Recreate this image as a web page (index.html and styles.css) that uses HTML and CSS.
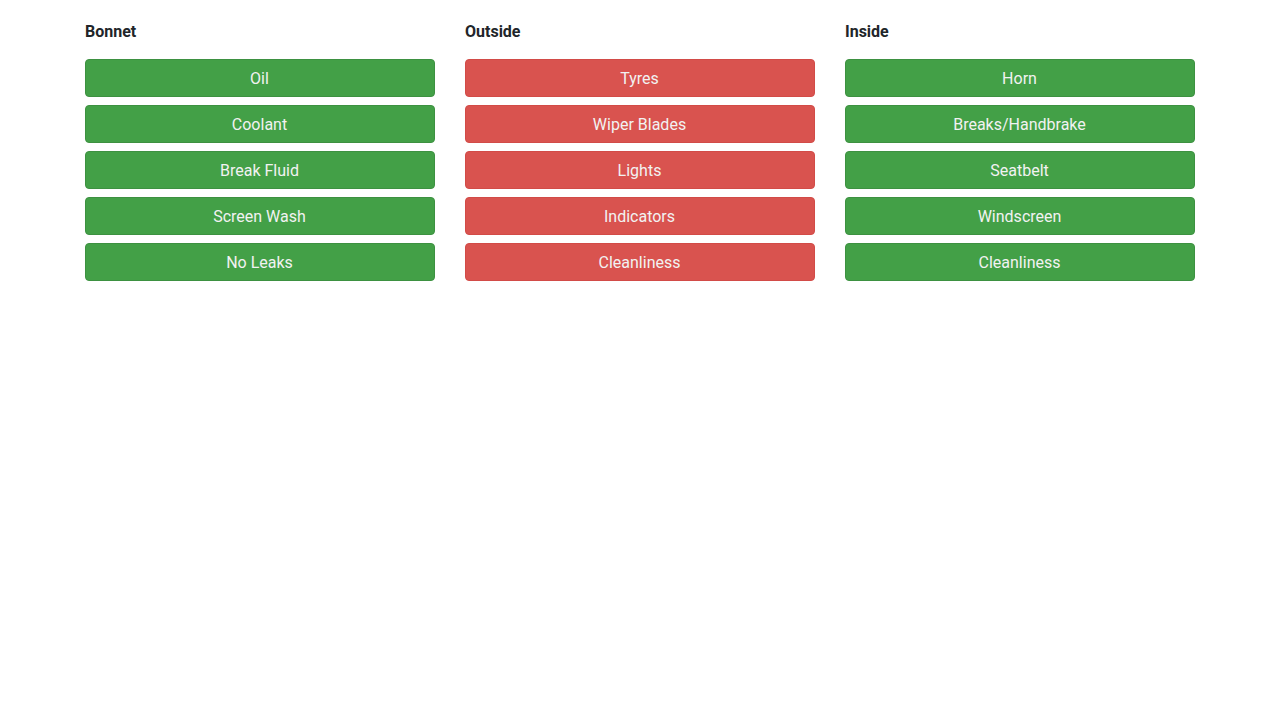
FILE: index.html
```
<!DOCTYPE html>
<html>
<head>
<meta charset="utf-8">
<link rel="stylesheet" href="styles.css">
</head>
<body>
<div class="container">
  <div class="col">
    <div class="heading">Bonnet</div>
    <div class="btn ok">Oil</div>
    <div class="btn ok">Coolant</div>
    <div class="btn ok">Break Fluid</div>
    <div class="btn ok">Screen Wash</div>
    <div class="btn ok">No Leaks</div>
  </div>
  <div class="col">
    <div class="heading">Outside</div>
    <div class="btn bad">Tyres</div>
    <div class="btn bad">Wiper Blades</div>
    <div class="btn bad">Lights</div>
    <div class="btn bad">Indicators</div>
    <div class="btn bad">Cleanliness</div>
  </div>
  <div class="col">
    <div class="heading">Inside</div>
    <div class="btn ok">Horn</div>
    <div class="btn ok">Breaks/Handbrake</div>
    <div class="btn ok">Seatbelt</div>
    <div class="btn ok">Windscreen</div>
    <div class="btn ok">Cleanliness</div>
  </div>
</div>
</body>
</html>
```
FILE: styles.css
```
html, body {
  margin: 0;
  padding: 0;
  background: #fff;
  font-family: Roboto, "Liberation Sans", sans-serif;
}
.container {
  width: 1110px;
  margin: 0 auto;
  padding-top: 20px;
  display: grid;
  grid-template-columns: repeat(3, 350px);
  column-gap: 30px;
}
.col {
  display: flex;
  flex-direction: column;
  gap: 8px;
}
.heading {
  font-size: 16px;
  font-weight: 700;
  line-height: 24px;
  color: #212529;
  margin-bottom: 7px;
}
.btn {
  height: 38px;
  box-sizing: border-box;
  border-radius: 4px;
  border: 1px solid transparent;
  font-size: 16px;
  line-height: 35px;
  padding: 1px 1px 0 0;
  text-align: center;
  color: #f2f2f2;
}
.ok {
  background: #43a047;
  border-color: #3d9141;
}
.bad {
  background: #d9534f;
  border-color: #d24b47;
}
```
